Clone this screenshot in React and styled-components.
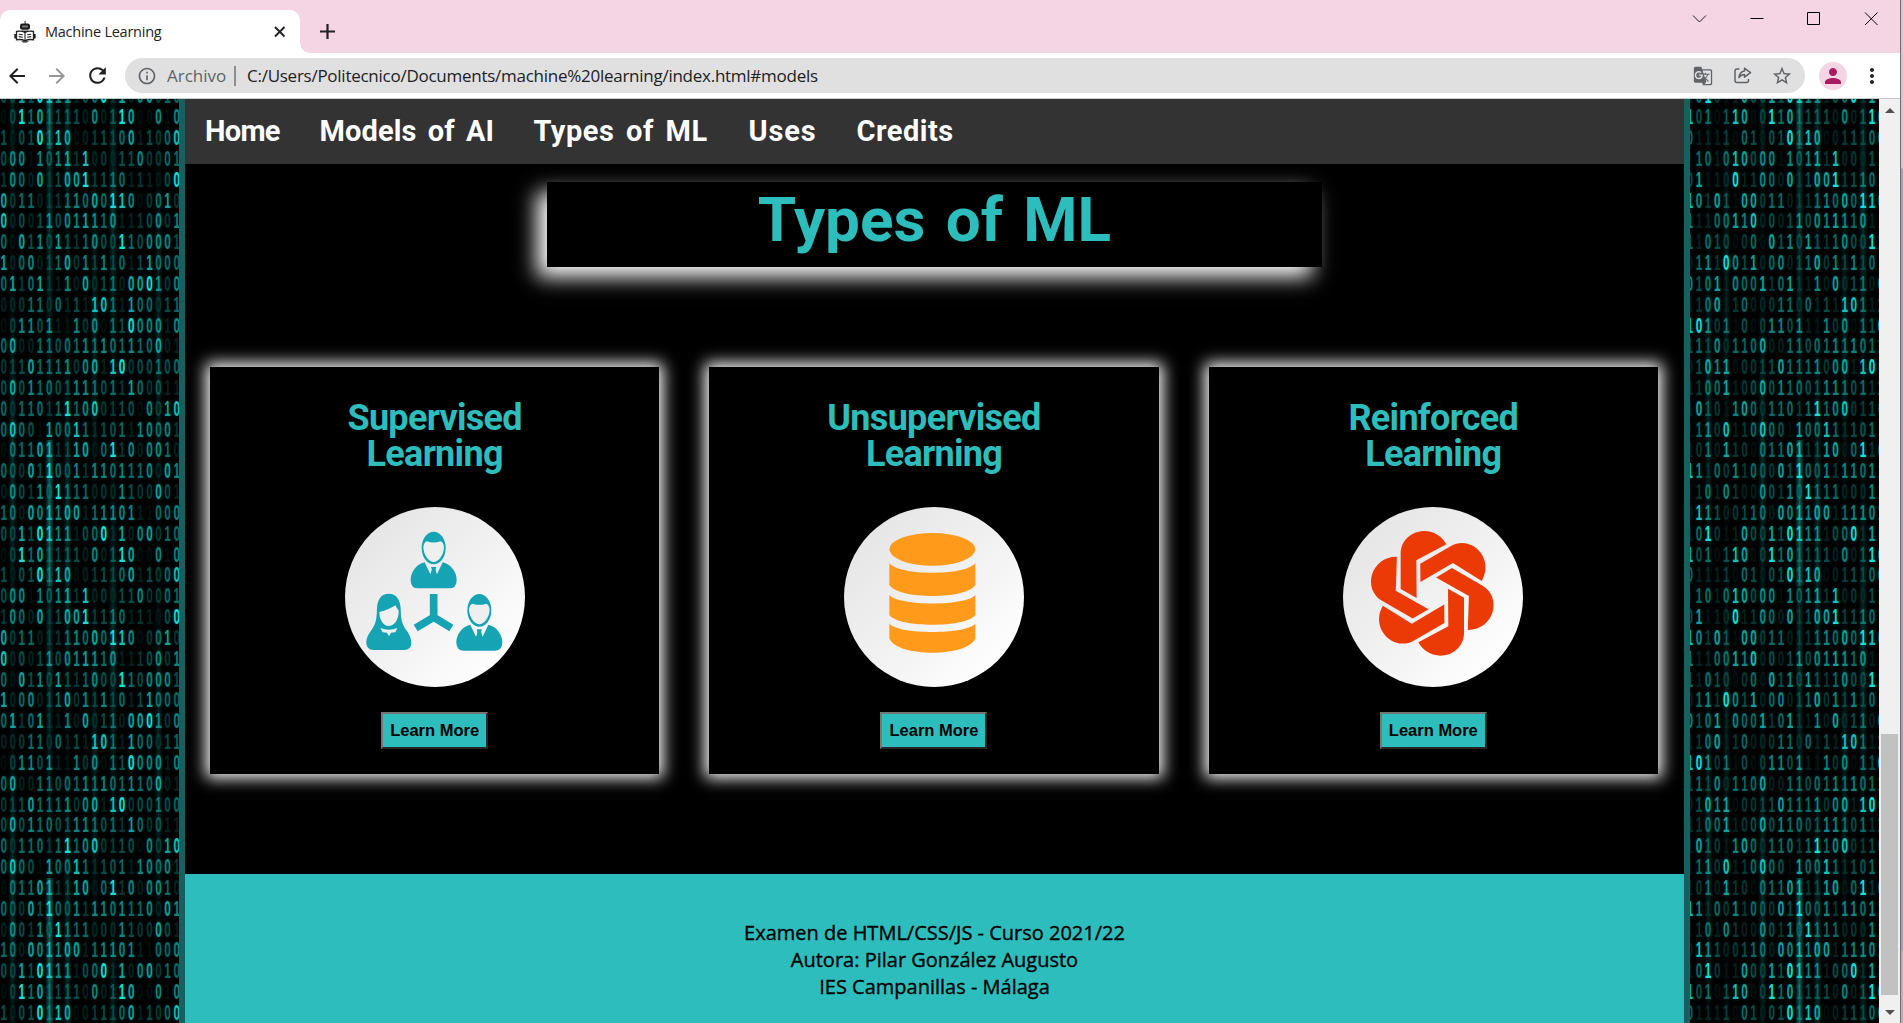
import React from 'react';
import styled, { createGlobalStyle, css } from 'styled-components';
import {
  MdArrowBack,
  MdArrowForward,
  MdRefresh,
  MdInfoOutline,
  MdStarBorder,
  MdPerson,
  MdMoreVert,
  MdGTranslate,
} from 'react-icons/md';

const TEAL = '#2ebdbd';
const UI_FONT = '"Open Sans", "Noto Sans", sans-serif';
const DISPLAY_FONT = 'Roboto, "Liberation Sans", sans-serif';

const GlobalStyle = createGlobalStyle`
  * { box-sizing: border-box; }
  body { margin: 0; background: #fff; overflow: hidden; }
`;

/* ---------- browser window ---------- */

const Desktop = styled.div`
  display: flex;
  width: 1903px;
  height: 1023px;
  overflow: hidden;
  font-family: ${UI_FONT};
`;

const Window = styled.div`
  width: 1900px;
  display: flex;
  flex-direction: column;
`;

const WindowEdge = styled.div`
  width: 3px;
  border-left: 1px solid #6c7075;
  background: linear-gradient(#c9cccc 0 168px, #9aa3b5 169px 950px, #b5b5b8 951px);
`;

const TabStrip = styled.div`
  height: 53px;
  flex: none;
  display: flex;
  align-items: flex-end;
  background: #f5d4e3;
`;

const Tab = styled.div`
  width: 300px;
  height: 43px;
  padding: 0 13px 0 14px;
  display: flex;
  align-items: center;
  background: #fff;
  border-radius: 10px 10px 0 0;
`;

const TabFoot = styled.div`
  width: 10px;
  height: 10px;
  background: radial-gradient(circle at 100% 0, transparent 9.5px, #fff 10px);
`;

const TabTitle = styled.span`
  flex: 1;
  margin-left: 9px;
  font-size: 14.5px;
  letter-spacing: -0.25px;
  color: #222;
`;

const NewTab = styled.div`
  align-self: flex-start;
  margin: 23px 0 0 9px;
  line-height: 0;
`;

const Caption = styled.div`
  align-self: flex-start;
  margin: 11px 21px 0 auto;
  display: flex;
  gap: 43px;
  line-height: 0;
`;

const Toolbar = styled.div`
  height: 46px;
  flex: none;
  display: flex;
  align-items: center;
  padding-left: 5px;
  background: #fff;
  border-bottom: 1px solid #c6c9c9;
`;

const ToolButton = styled.div`
  width: 40px;
  line-height: 0;
  color: ${(p) => (p.$dim ? '#97979a' : '#202124')};
`;

const Omnibox = styled.div`
  width: 1680px;
  height: 35px;
  display: flex;
  align-items: center;
  padding: 0 12px;
  border-radius: 18px;
  background: #e0e0e0;
  color: #5f6368;
  font-size: 17px;
`;

const Scheme = styled.span`
  margin-left: 10px;
  width: 67px;
  letter-spacing: 0;
`;

const Divider = styled.i`
  width: 2px;
  height: 20px;
  background: #8e8e8e;
`;

const Address = styled.span`
  margin-left: 11px;
  flex: 1;
  color: #202124;
  letter-spacing: -0.26px;
`;

const OmniIcons = styled.div`
  display: flex;
  align-items: center;
  gap: 19px;
  svg:first-child { margin-right: 2px; }
`;

const Avatar = styled.div`
  width: 28px;
  height: 28px;
  margin-left: 14px;
  display: grid;
  place-items: center;
  border-radius: 50%;
  background: #f5d4e3;
  color: #a91c62;
`;

const MenuDots = styled.div`
  margin-left: 13px;
  line-height: 0;
  color: #202124;
`;

/* ---------- page ---------- */

const Viewport = styled.div`
  height: 924px;
  display: flex;
  background: #000;
`;

const Page = styled.main`
  width: 1511px;
  flex: none;
  border: solid #17605f;
  border-width: 0 6px;
  background: #000;
  display: flex;
  flex-direction: column;
`;

const Nav = styled.nav`
  height: 65px;
  flex: none;
  display: flex;
  align-items: center;
  padding-bottom: 2px;
  background: #333;
`;

const NavLink = styled.a`
  width: ${(p) => p.$w + 40}px;
  padding: 0 20px;
  white-space: nowrap;
  color: #fff;
  font: 700 29px/40px ${DISPLAY_FONT};
  letter-spacing: ${(p) => p.$ls}px;
  word-spacing: 4px;
`;

const Title = styled.h1`
  width: 775px;
  height: 85px;
  margin: 18px 0 0 362px;
  flex: none;
  text-align: center;
  color: ${TEAL};
  background: #000;
  box-shadow: -10px 10px 20px #fff;
  font: 700 62px/76px ${DISPLAY_FONT};
  word-spacing: 5px;
`;

const Cards = styled.section`
  margin-top: 100px;
  height: 507px;
  padding-right: 1px;
  display: grid;
  grid-template-columns: repeat(3, 1fr);
  align-items: start;
`;

const Card = styled.article`
  height: 407px;
  margin: 0 25px;
  display: flex;
  flex-direction: column;
  align-items: center;
  background: #000;
  box-shadow: 0 0 15px 4px #fff;
`;

const CardTitle = styled.h2`
  margin: 34px 0 35px;
  text-align: center;
  color: ${TEAL};
  font: 700 36px/35.5px ${DISPLAY_FONT};
  letter-spacing: -0.7px;
`;

const Disc = styled.div`
  width: 180px;
  height: 180px;
  border-radius: 50%;
  background: linear-gradient(135deg, #e5e5e5 10%, #f1f1f1 50%, #fff 88%);
  svg { display: block; }
`;

const LearnMore = styled.button`
  width: 107px;
  height: 37px;
  margin-top: 25px;
  padding: 0;
  border: 2px solid;
  border-color: #767676 #262626 #262626 #767676;
  background: ${TEAL};
  color: #000;
  font: 700 16.5px "Liberation Sans", Arial, sans-serif;
`;

const Footer = styled.footer`
  flex: 1;
  padding-top: 45px;
  text-align: center;
  background: ${TEAL};
  color: #000;
  font: 400 20px/27px ${UI_FONT};
  -webkit-text-stroke: 0.35px #000;
  p { margin: 0; }
`;

/* ---------- falling digits ---------- */

const Rain = styled.aside`
  width: ${(p) => p.$w}px;
  flex: none;
  overflow: hidden;
  background: #000;
`;

const RainRows = styled.div`
  margin: -12.6px 0 0 ${(p) => p.$shift}px;
`;

const RainRow = styled.div`
  display: flex;
  height: 20.833px;
`;

const ALPHA = [0, 0.08, 0.15, 0.23, 0.33, 0.44, 0.56, 0.7, 0.86, 1];

const streak = css`
  background: linear-gradient(90deg, transparent, rgba(10, 120, 112, ${(p) => p.$glow}), transparent);
`;

const Digit = styled.span`
  width: 9.115px;
  flex: none;
  ${(p) => p.$glow > 0 && streak}
  b {
    display: block;
    text-align: center;
    font: 700 11.8px/20.8px "Liberation Sans", sans-serif;
    transform: scaleY(1.9);
    color: rgba(24, 222, 216, ${(p) => ALPHA[p.$level]});
    text-shadow: 0 0 3px rgba(0, 150, 140, ${(p) => ALPHA[p.$level] * 0.6});
  }
`;

// Each entry: digits and their brightness, seven lead-in columns first.
const RAIN = [
  ['1010110' + '00110111100011000010', '2593127' + '43749866245927267355'],
  ['1010110' + '00110111100011000010', '8451487' + '13957344426249711616'],
  ['0111100' + '10010110001110011000', '5222315' + '41449487123435724358'],
  ['1101010' + '00011011110001100001', '1552587' + '46616467382314463355'],
  ['0111001' + '10000110011110111000', '4712292' + '36527247793455232149'],
  ['1010110' + '00110111100011000010', '8637417' + '73552235657598613573'],
  ['1110011' + '00001100111101110001', '6225576' + '82424646676562234636'],
  ['1101000' + '00011011110001100001', '5254313' + '51746374356439546664'],
  ['0111001' + '10000110011110111000', '2563964' + '72562357363635247555'],
  ['0101100' + '01101111000110000100', '6457165' + '57357226272452779636'],
  ['1100110' + '00011001111011100011', '2357135' + '22355252428852755245'],
  ['1010110' + '00110111100011000010', '8963514' + '13664621636154966626'],
  ['1110011' + '00001100111101110001', '4536255' + '57225545565655655722'],
  ['0101100' + '01101111000110000100', '2476713' + '33475556367289344545'],
  ['1100110' + '00011001111011100011', '3355723' + '47465544665453753422'],
  ['1010110' + '00110111100011000010', '2743167' + '52555359568334416378'],
  ['1110011' + '00001100111101110001', '1563823' + '58541755852445266563'],
  ['1010110' + '00110111100011000010', '2352733' + '15557733771593626652'],
  ['1110011' + '00001100111101110001', '8625363' + '54374954636656556276'],
  ['1101010' + '00011011110001100001', '1352632' + '26436395552326433742'],
  ['0111001' + '10000110011110111000', '2864234' + '55276767725666621556'],
];

const STREAKS = { 2: 0.3, 4: 0.25, 8: 0.35, 12: 0.4, 14: 0.35, 17: 0.25, 19: 0.35, 24: 0.3 };

function glowFor(col, row) {
  if (col === 12 && (row > 16 || row < 3)) return 0.8;
  const base = STREAKS[col] || 0;
  return base * (0.6 + 0.4 * Math.cos((row + col * 3) / 3.3));
}

function DigitRain({ width, from, count, shift }) {
  return (
    <Rain $w={width} aria-hidden="true">
      <RainRows $shift={shift}>
        {Array.from({ length: 45 }, (_, y) => {
          const row = y % 21;
          const [digits, levels] = RAIN[row];
          return (
            <RainRow key={y}>
              {Array.from({ length: count }, (_, x) => {
                const c = from + x;
                return (
                  <Digit key={c} $level={+levels[c]} $glow={glowFor(c, row)}>
                    <b>{digits[c]}</b>
                  </Digit>
                );
              })}
            </RainRow>
          );
        })}
      </RainRows>
    </Rain>
  );
}

/* ---------- scrollbar ---------- */

const Scrollbar = styled.div`
  width: 21px;
  flex: none;
  padding: 9px 2px 8px;
  display: flex;
  flex-direction: column;
  align-items: center;
  background: #f0f0f0;
`;

const Arrow = styled.i`
  border: solid transparent;
  border-width: 0 5px;
  ${(p) => (p.$down ? 'border-top: 5px solid #505050;' : 'border-bottom: 5px solid #505050;')}
`;

const Thumb = styled.div`
  width: 17px;
  height: 261px;
  margin: 621px 0 15px;
  background: #c1c1c1;
`;

/* ---------- drawings ---------- */

const RobotIcon = () => (
  <svg width="22" height="22" viewBox="0 0 22 22">
    <path d="M10.6 0h1v3h-1z" fill="#222" />
    <rect x="6" y="2.4" width="10" height="6.4" rx="2.4" fill="#1b1b1b" />
    <rect x="7.8" y="4.6" width="6.4" height="2" rx="1" fill="#777" />
    <path d="M8 9.6h6v1.6H8z" fill="#222" />
    <path d="M2.5 10.5c3-.7 6-.4 8.5 1 2.500-1.400 5.500-1.700 8.500-1v8.300c-3-.6-6-.3-8.500 1-2.500-1.300-5.500-1.600-8.500-1z" fill="#fff" stroke="#222" strokeWidth="1.3" />
    <path d="M11 11.500v8M4.800 13.200l4 .6M4.800 15.600l4 .6M17.200 13.200l-4 .6M17.200 15.600l-4 .6" stroke="#222" strokeWidth="1.1" />
    <path d="M.3 13h2v4.500h-2zM19.700 13h2v4.500h-2z" fill="#222" />
    <path d="M7 20.300h8l-2 1.200H9z" fill="#222" />
  </svg>
);

const ShareIcon = () => (
  <svg width="18" height="17" viewBox="0 0 18 17" fill="none" stroke="#5f6368" strokeWidth="1.5">
    <path d="M5.500 2H3Q1 2 1 4v9.500q0 2 2 2h9.500q2 0 2-2V12" />
    <path d="M10.500 1.200l6 4.500-6 4.500V7.600C8 7.600 6.300 8.500 5 10.500c.4-3.700 2.300-6 5.500-6.500z" strokeLinejoin="round" />
  </svg>
);

const Suit = ({ x, y }) => (
  <g transform={`translate(${x} ${y})`}>
    <ellipse cx="0" cy="49" rx="36" ry="49" fill="#16a3b3" />
    <path d="M-31 45Q-28 30-20 29Q0 36 20 29Q28 30 31 45C31 70 14 91 0 91S-31 70-31 45z" fill="#eeefef" />
    <path d="M-27 92C-53 98-70 123-69 147Q-68 170-46 170H46Q68 170 69 147C70 123 53 98 27 92L10 128L5 114L8 106H-8L-5 114L-10 128z" fill="#16a3b3" />
    <path d="M-5 108H5L7 130H-7z" fill="#16a3b3" />
  </g>
);

const PeopleIcon = () => (
  <svg width="180" height="180" viewBox="0 0 540 540">
    <Suit x={266} y={74} />
    <Suit x={403} y={261} />
    <path
      d="M131 260C106 260 97 281 96 304C95 332 94 350 80 368C68 384 64 395 64 409Q65 429 86 429H177Q199 429 199 409C198 392 194 382 183 368C169 350 168 332 167 304C166 281 156 260 131 260z"
      fill="#16a3b3"
    />
    <path d="M103 315Q133 308 151 295Q156 304 161 311C162 339 146 357 131 357S103 339 103 315z" fill="#eff0f0" />
    <path d="M106 363Q132 374 157 363L151 376L138 377L132 388L126 377L113 376z" fill="#e8f3f4" />
    <path d="M266 261V331L212 363M266 331L319 363" fill="none" stroke="#16a3b3" strokeWidth="23" />
  </svg>
);

const DatabaseIcon = () => (
  <svg width="180" height="180" viewBox="0 0 540 540" fill="#ff9a1b">
    <ellipse cx="265" cy="127" rx="129" ry="49" />
    <path d="M136 168C164 207 366 207 394 168V234C366 278 164 278 136 234z" />
    <path d="M136 264C164 298 366 298 394 264V324C366 363 164 363 136 324z" />
    <path d="M136 350C164 383 366 383 394 350V394C372 452 158 452 136 394z" />
  </svg>
);

const KnotIcon = () => (
  <svg width="180" height="180" viewBox="0 0 540 540" fill="#ec3a06">
    {[0, 60, 120, 180, 240, 300].map((a) => (
      <path
        key={a}
        transform={`translate(268 259) rotate(${a})`}
        d="M-47 14L-95 -13V-118C-95 -190 4 -215 42 -147L-48 -99z"
      />
    ))}
  </svg>
);

const CARDS = [
  { title: ['Supervised', 'Learning'], icon: <PeopleIcon /> },
  { title: ['Unsupervised', 'Learning'], icon: <DatabaseIcon /> },
  { title: ['Reinforced', 'Learning'], icon: <KnotIcon /> },
];

const LINKS = [
  ['Home', 74.5, -0.7],
  ['Models of AI', 174, 0.1],
  ['Types of ML', 175, 0.5],
  ['Uses', 68, 0.9],
  ['Credits', 97, 0.5],
];

export default function App() {
  return (
    <Desktop>
      <GlobalStyle />
      <Window>
        <TabStrip>
          <Tab>
            <RobotIcon />
            <TabTitle>Machine Learning</TabTitle>
            <svg width="14" height="14" viewBox="0 0 14 14" stroke="#202124" strokeWidth="1.9">
              <path d="M2 2l9.500 9.500M11.500 2L2 11.500" />
            </svg>
          </Tab>
          <TabFoot />
          <NewTab>
            <svg width="17" height="17" viewBox="0 0 17 17" stroke="#202124" strokeWidth="2.200">
              <path d="M1 8.500h15M8.500 1v15" />
            </svg>
          </NewTab>
          <Caption>
            <svg width="15" height="15" viewBox="0 0 15 15" fill="none" stroke="#222">
              <path d="M1 4.500l6.500 6.500L14 4.500" />
            </svg>
            <svg width="14" height="15" viewBox="0 0 14 15" stroke="#000">
              <path d="M.5 7.500h13" />
            </svg>
            <svg width="14" height="15" viewBox="0 0 14 15" fill="none" stroke="#000">
              <path d="M.5 1.500h12v12H.5z" />
            </svg>
            <svg width="15" height="15" viewBox="0 0 15 15" stroke="#000">
              <path d="M1 1.500l12.500 12.500M13.500 1.500L1 14" />
            </svg>
          </Caption>
        </TabStrip>
        <Toolbar>
          <ToolButton><MdArrowBack size={24} /></ToolButton>
          <ToolButton $dim><MdArrowForward size={24} /></ToolButton>
          <ToolButton><MdRefresh size={25} /></ToolButton>
          <Omnibox>
            <MdInfoOutline size={20} />
            <Scheme>Archivo</Scheme>
            <Divider />
            <Address>C:/Users/Politecnico/Documents/machine%20learning/index.html#models</Address>
            <OmniIcons>
              <MdGTranslate size={20} />
              <ShareIcon />
              <MdStarBorder size={22} />
            </OmniIcons>
          </Omnibox>
          <Avatar><MdPerson size={24} /></Avatar>
          <MenuDots><MdMoreVert size={24} /></MenuDots>
        </Toolbar>
        <Viewport>
          <DigitRain width={179} from={7} count={20} shift={-0.9} />
          <Page>
            <Nav>
              {LINKS.map(([label, w, ls]) => (
                <NavLink key={label} $w={w} $ls={ls}>{label}</NavLink>
              ))}
            </Nav>
            <Title>Types of ML</Title>
            <Cards>
              {CARDS.map((c) => (
                <Card key={c.title[0]}>
                  <CardTitle>
                    {c.title[0]}
                    <br />
                    {c.title[1]}
                  </CardTitle>
                  <Disc>{c.icon}</Disc>
                  <LearnMore>Learn More</LearnMore>
                </Card>
              ))}
            </Cards>
            <Footer>
              <p>Examen de HTML/CSS/JS - Curso 2021/22</p>
              <p>Autora: Pilar González Augusto</p>
              <p>IES Campanillas - Málaga</p>
            </Footer>
          </Page>
          <DigitRain width={189} from={0} count={22} shift={-4.7} />
          <Scrollbar>
            <Arrow />
            <Thumb />
            <Arrow $down />
          </Scrollbar>
        </Viewport>
      </Window>
      <WindowEdge />
    </Desktop>
  );
}
